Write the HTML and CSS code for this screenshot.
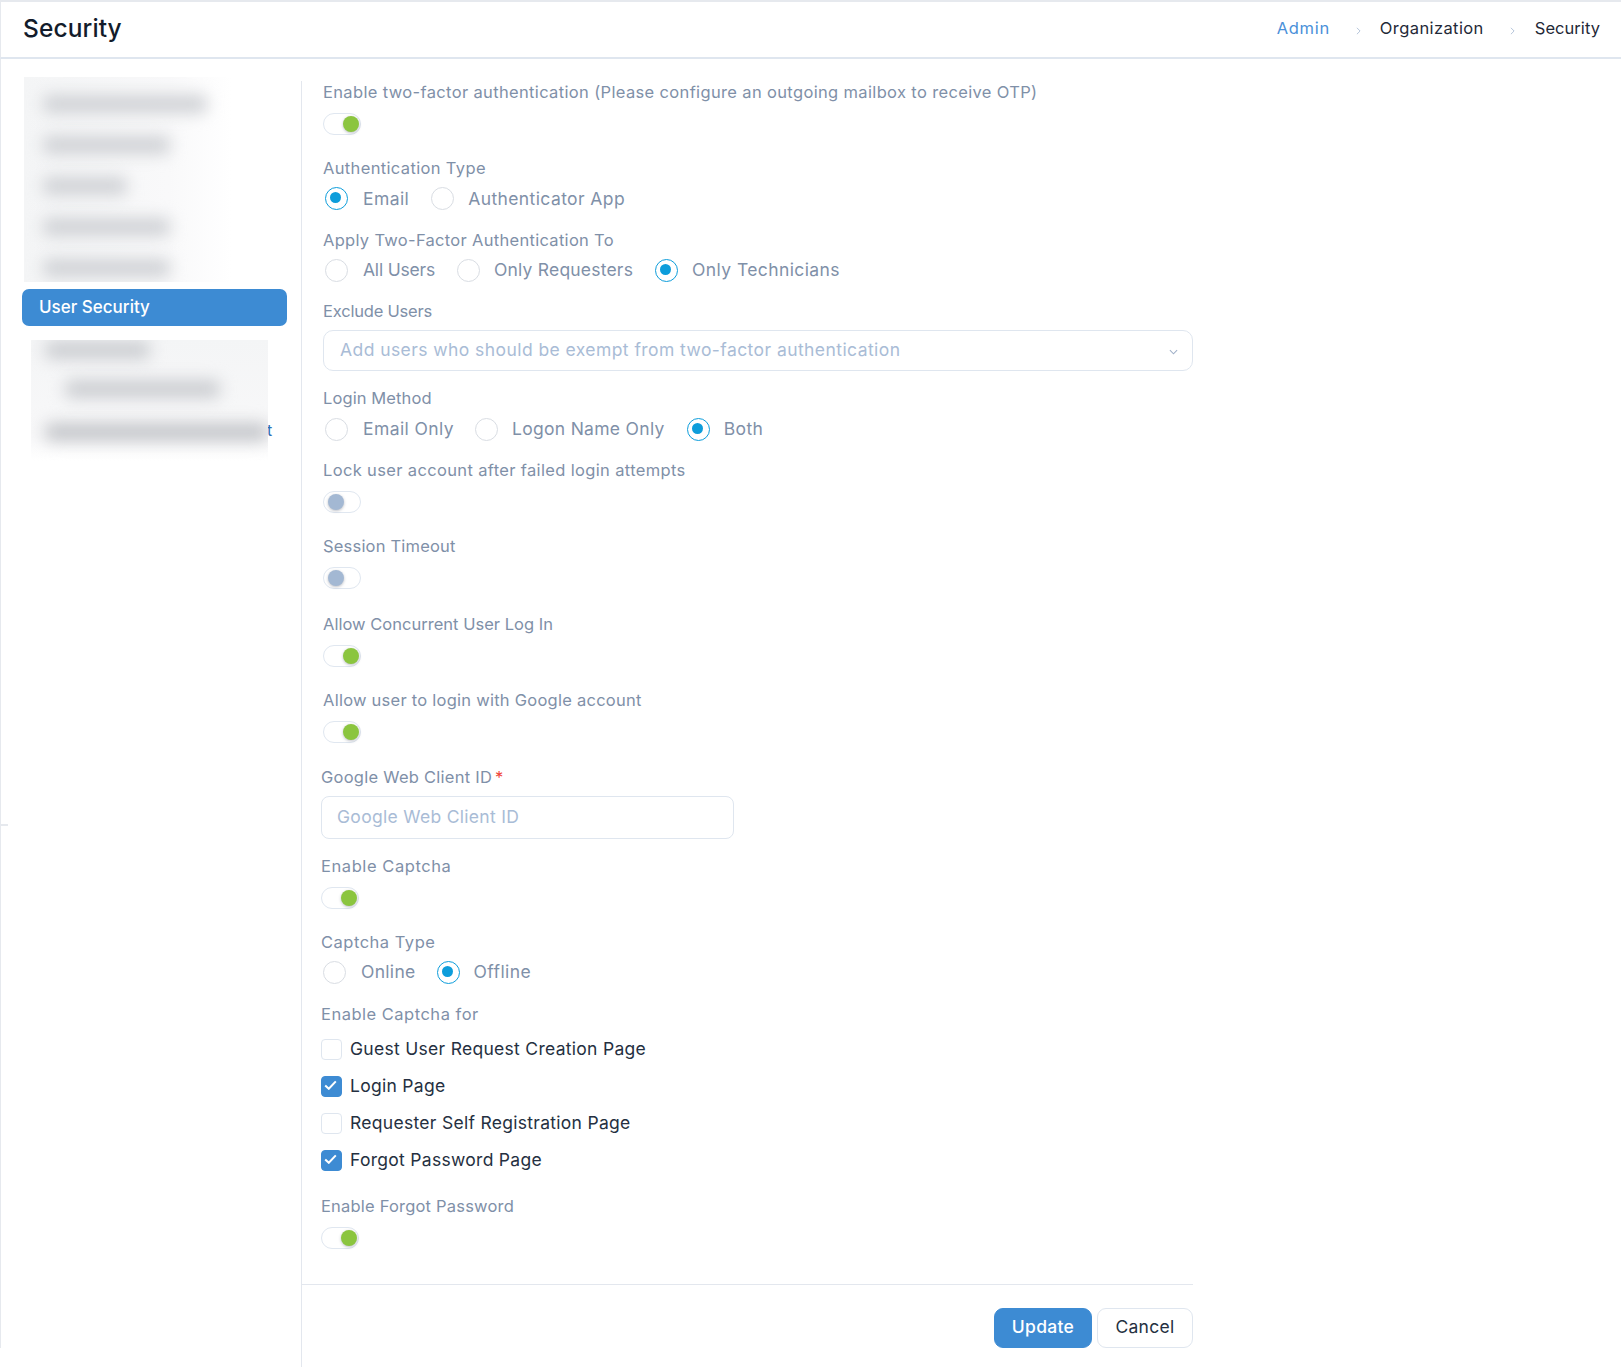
FILE: index.html
```html
<!DOCTYPE html>
<html lang="en">
<head>
<meta charset="utf-8">
<title>Security</title>
<link rel="stylesheet" href="styles.css">
</head>
<body>
<div class="page">
  <header class="topbar">
    <h1 class="title">Security</h1>
    <nav class="crumbs">
      <a class="crumb-link">Admin</a>
      <svg class="crumb-sep" viewBox="0 0 6 10"><path d="M1 1l4 4-4 4"/></svg>
      <span class="crumb">Organization</span>
      <svg class="crumb-sep wide" viewBox="0 0 6 10"><path d="M1 1l4 4-4 4"/></svg>
      <span class="crumb last">Security</span>
    </nav>
  </header>
  <div class="body">
    <aside class="side">
      <span class="edge-mark"></span>
      <div class="blur-top">
        <i class="bar w164"></i><i class="bar w127"></i><i class="bar w84"></i><i class="bar w127"></i><i class="bar w127"></i>
      </div>
      <div class="side-active">User Security</div>
      <div class="blur-wrap">
        <div class="blur-low">
          <i class="bar low w105"></i><i class="bar low ind w155"></i><i class="bar low dark w223"></i>
        </div>
        <span class="stray">t</span>
      </div>
    </aside>
    <main class="main">
      <form class="form">
        <div class="part">
          <div class="label mb10">Enable two-factor authentication (Please configure an outgoing mailbox to receive OTP)</div>
          <div class="toggle on mb22"></div>

          <div class="label mb8">Authentication Type</div>
          <div class="radios low mb20">
            <label class="radio checked">Email</label>
            <label class="radio">Authenticator App</label>
          </div>

          <div class="label ls3 mb8">Apply Two-Factor Authentication To</div>
          <div class="radios mb19">
            <label class="radio ls-tight">All Users</label>
            <label class="radio ls2">Only Requesters</label>
            <label class="radio checked">Only Technicians</label>
          </div>

          <div class="label ls-tight mb8">Exclude Users</div>
          <div class="select mb16">
            <span class="placeholder">Add users who should be exempt from two-factor authentication</span>
            <svg class="chev" viewBox="0 0 10 6"><path d="M1 1l4 4 4-4"/></svg>
          </div>

          <div class="label ls1 mb9">Login Method</div>
          <div class="radios mb19">
            <label class="radio close">Email Only</label>
            <label class="radio ls3">Logon Name Only</label>
            <label class="radio checked">Both</label>
          </div>

          <div class="label mb10">Lock user account after failed login attempts</div>
          <div class="toggle mb22"></div>

          <div class="label ls2 mb10">Session Timeout</div>
          <div class="toggle mb24"></div>

          <div class="label ls0 mb10">Allow Concurrent User Log In</div>
          <div class="toggle on mb22"></div>

          <div class="label ls25 mb10">Allow user to login with Google account</div>
          <div class="toggle on mb22"></div>
        </div>

        <div class="part shifted">
          <div class="label ls25 mb8">Google Web Client ID<span class="req">*</span></div>
          <div class="input mb16">Google Web Client ID</div>

          <div class="label ls55 mb10">Enable Captcha</div>
          <div class="toggle on mb22"></div>

          <div class="label ls5 mb8">Captcha Type</div>
          <div class="radios mb20">
            <label class="radio ls3 close">Online</label>
            <label class="radio checked">Offline</label>
          </div>

          <div class="label ls5 mb6">Enable Captcha for</div>
          <div class="checks mb16">
            <label class="check">Guest User Request Creation Page</label>
            <label class="check checked"><svg class="tick" viewBox="0 0 13 10"><path d="M1.2 5.4l3.6 3.4 7-7.4"/></svg>Login Page</label>
            <label class="check">Requester Self Registration Page</label>
            <label class="check checked"><svg class="tick" viewBox="0 0 13 10"><path d="M1.2 5.4l3.6 3.4 7-7.4"/></svg>Forgot Password Page</label>
          </div>

          <div class="label ls2 mb10">Enable Forgot Password</div>
          <div class="toggle on"></div>
        </div>

        <footer class="actions">
          <button type="button" class="btn primary">Update</button>
          <button type="button" class="btn">Cancel</button>
        </footer>
      </form>
    </main>
  </div>
</div>
</body>
</html>
```
FILE: styles.css
```css
* { box-sizing: border-box; }
html, body { margin: 0; padding: 0; background: #fff; }
body { font-family: Inter, "Open Sans", sans-serif; color: #1f2937; overflow: hidden; }
.page { width: 1621px; height: 1367px; display: flex; flex-direction: column; }
.topbar {
  height: 59px; flex: none; display: flex; align-items: center; justify-content: space-between;
  padding: 0 21px 3px 22px; border-top: 2px solid #e6e9ee; border-bottom: 2px solid #dfe6ef; border-left: 1px solid #e6e9ee;
}
.title { margin: 0; font-size: 24.5px; font-weight: 500; color: #131c2b; letter-spacing: 0.1px; }
.crumbs { display: flex; align-items: center; font-size: 16.5px; letter-spacing: .4px; color: #1f2937; }
.crumb-link { color: #4a90d9; letter-spacing: .7px; }
.crumb.last { letter-spacing: .05px; }
.crumb-sep { width: 5px; height: 8px; margin: 6px 19px 0 26px; fill: none; stroke: #b3c2d8; stroke-width: 1.2; }
.crumb-sep.wide { margin-right: 20px; }
.body { flex: 1; display: flex; min-height: 0; }
.side {
  width: 301px; flex: none; height: 1289px; border-left: 1px solid #e6e9ee; padding: 18px 0 0 21px; position: relative;
}
.edge-mark { position: absolute; left: 0; top: 765px; width: 7px; height: 2px; background: #e6e9ee; }
.blur-top {
  width: 208px; height: 205px; margin: 0 0 7px 2px; padding: 18px 0 0 19px; overflow: hidden;
  background: linear-gradient(90deg, #f4f5f6 0, #f9f9fa 70%, #fff 100%);
  display: flex; flex-direction: column; gap: 23px;
}
.bar { display: block; height: 18px; background: #cfd1d5; filter: blur(8px); border-radius: 6px; flex: none; }
.w164 { width: 164px; }
.w127 { width: 127px; }
.w84 { width: 84px; }
.w105 { width: 105px; }
.w155 { width: 155px; }
.w223 { width: 223px; }
.side-active {
  width: 265px; height: 37px; background: #3d8bd3; color: #fff; border-radius: 7px;
  font-size: 17px; font-weight: 500; line-height: 36px; padding-left: 17px;
}
.blur-wrap { position: relative; width: 245px; margin: 14px 0 0 9px; }
.blur-low {
  position: relative; z-index: 1; width: 237px; height: 121px; overflow: hidden; padding: 1px 0 0 14px;
  background: linear-gradient(180deg, #f4f5f6 0, #f8f8f9 80%, #fff 100%);
  display: flex; flex-direction: column; gap: 21px;
}
.bar.low { background: #cbcdd1; }
.ind { margin-left: 20px; }
.bar.dark { margin-left: 0; margin-top: 4px; background: #c4c6ca; }
.stray { position: absolute; left: 236px; top: 80px; color: #2f6fb5; font-size: 16px; line-height: 20px; }
.main { flex: 1; min-width: 0; padding-top: 22px; }
.form { width: 892px; border-left: 1px solid #e3e7ee; height: 1286px; }
.part { padding-left: 21px; }
.shifted { padding-left: 19px; padding-top: 1px; }
.label { font-size: 16.5px; letter-spacing: .35px; line-height: 22px; color: #7f90a8; }
.req { color: #f0453a; margin-left: 3px; }
.mb6 { margin-bottom: 6px; }
.mb8 { margin-bottom: 8px; }
.mb9 { margin-bottom: 9px; }
.mb10 { margin-bottom: 10px; }
.mb16 { margin-bottom: 16px; }
.mb19 { margin-bottom: 19px; }
.mb20 { margin-bottom: 20px; }
.mb22 { margin-bottom: 22px; }
.mb24 { margin-bottom: 24px; }
.toggle {
  position: relative; width: 38px; height: 22px; border: 1px solid #e0e7f0; border-radius: 11px; background: #fff;
}
.toggle::after {
  content: ""; position: absolute; top: 2px; left: 4px; width: 16px; height: 16px; border-radius: 50%;
  background: #a3b8d3; box-shadow: 0 1px 3px rgba(60,70,90,.35);
}
.toggle.on::after { left: 19px; background: #8bc53f; }
.radios { display: flex; height: 22px; align-items: flex-start; padding-left: 3px; }
.radio { position: relative; padding-left: 37px; font-size: 17.5px; letter-spacing: .4px; line-height: 22px; color: #7f90a8; margin-right: 22px; }
.radios.low .radio { padding-top: 1px; }
.radio.close { margin-right: 21px; }
.radio::before {
  content: ""; position: absolute; left: 0; top: 0; width: 21px; height: 21px; border-radius: 50%; border: 1px solid #d9dde3; background: #fff;
}
.radio:first-child::before { left: -1px; }
.radio:first-child::after { margin-left: -1px; }
.radio.checked::before { border: 1.5px solid #0d9ddb; }
.radio.checked::after {
  content: ""; position: absolute; left: 5px; top: 5px; width: 11px; height: 11px; border-radius: 50%; background: #0d9ddb;
}
.label.ls-tight, .radio.ls-tight { letter-spacing: -.2px; }
.label.ls0 { letter-spacing: .02px; }
.label.ls1 { letter-spacing: .1px; }
.label.ls2, .radio.ls2 { letter-spacing: .2px; }
.label.ls25 { letter-spacing: .25px; }
.label.ls3, .radio.ls3 { letter-spacing: .3px; }
.label.ls5 { letter-spacing: .5px; }
.label.ls55 { letter-spacing: .57px; }
.select {
  width: 870px; height: 41px; border: 1px solid #dfe6ef; border-radius: 10px; display: flex; align-items: center; justify-content: space-between;
  padding: 0 14px 3px 16px; font-size: 17.5px; letter-spacing: .43px; color: #a9bcd6;
}
.chev { width: 9px; height: 6px; fill: none; stroke: #a0b0c8; stroke-width: 1.2; margin-top: 5px; }
.input {
  width: 413px; height: 43px; border: 1px solid #dfe6ef; border-radius: 8px; padding: 0 15px; line-height: 40px; font-size: 17.5px; letter-spacing: .3px; color: #a9bcd6;
}
.checks { display: flex; flex-direction: column; }
.check { position: relative; height: 37px; line-height: 36px; padding-left: 29px; font-size: 17.5px; letter-spacing: .29px; color: #253041; display: block; }
.check::before {
  content: ""; position: absolute; left: 0; top: 8px; width: 19px; height: 19px; border-radius: 4px; border: 1px solid #dfe6ef; background: #fff;
}
.check.checked::before { background: #3d8bd3; border-color: #3d8bd3; }
.tick { position: absolute; left: 3px; top: 12px; width: 13px; height: 10px; fill: none; stroke: #fff; stroke-width: 2; z-index: 1; }
.actions {
  margin-top: 35px; border-top: 1px solid #e3e7ee; padding-top: 23px; display: flex; justify-content: flex-end; gap: 5px;
}
.btn {
  width: 96px; height: 40px; border: 1px solid #dfe6ef; border-radius: 9px; background: #fff; font: 400 17.5px Inter, sans-serif; letter-spacing: .3px; color: #253041; padding: 0 0 3px;
}
.btn.primary { width: 98px; background: #3d8bd3; border-color: #3d8bd3; color: #fff; font-weight: 500; }
```
